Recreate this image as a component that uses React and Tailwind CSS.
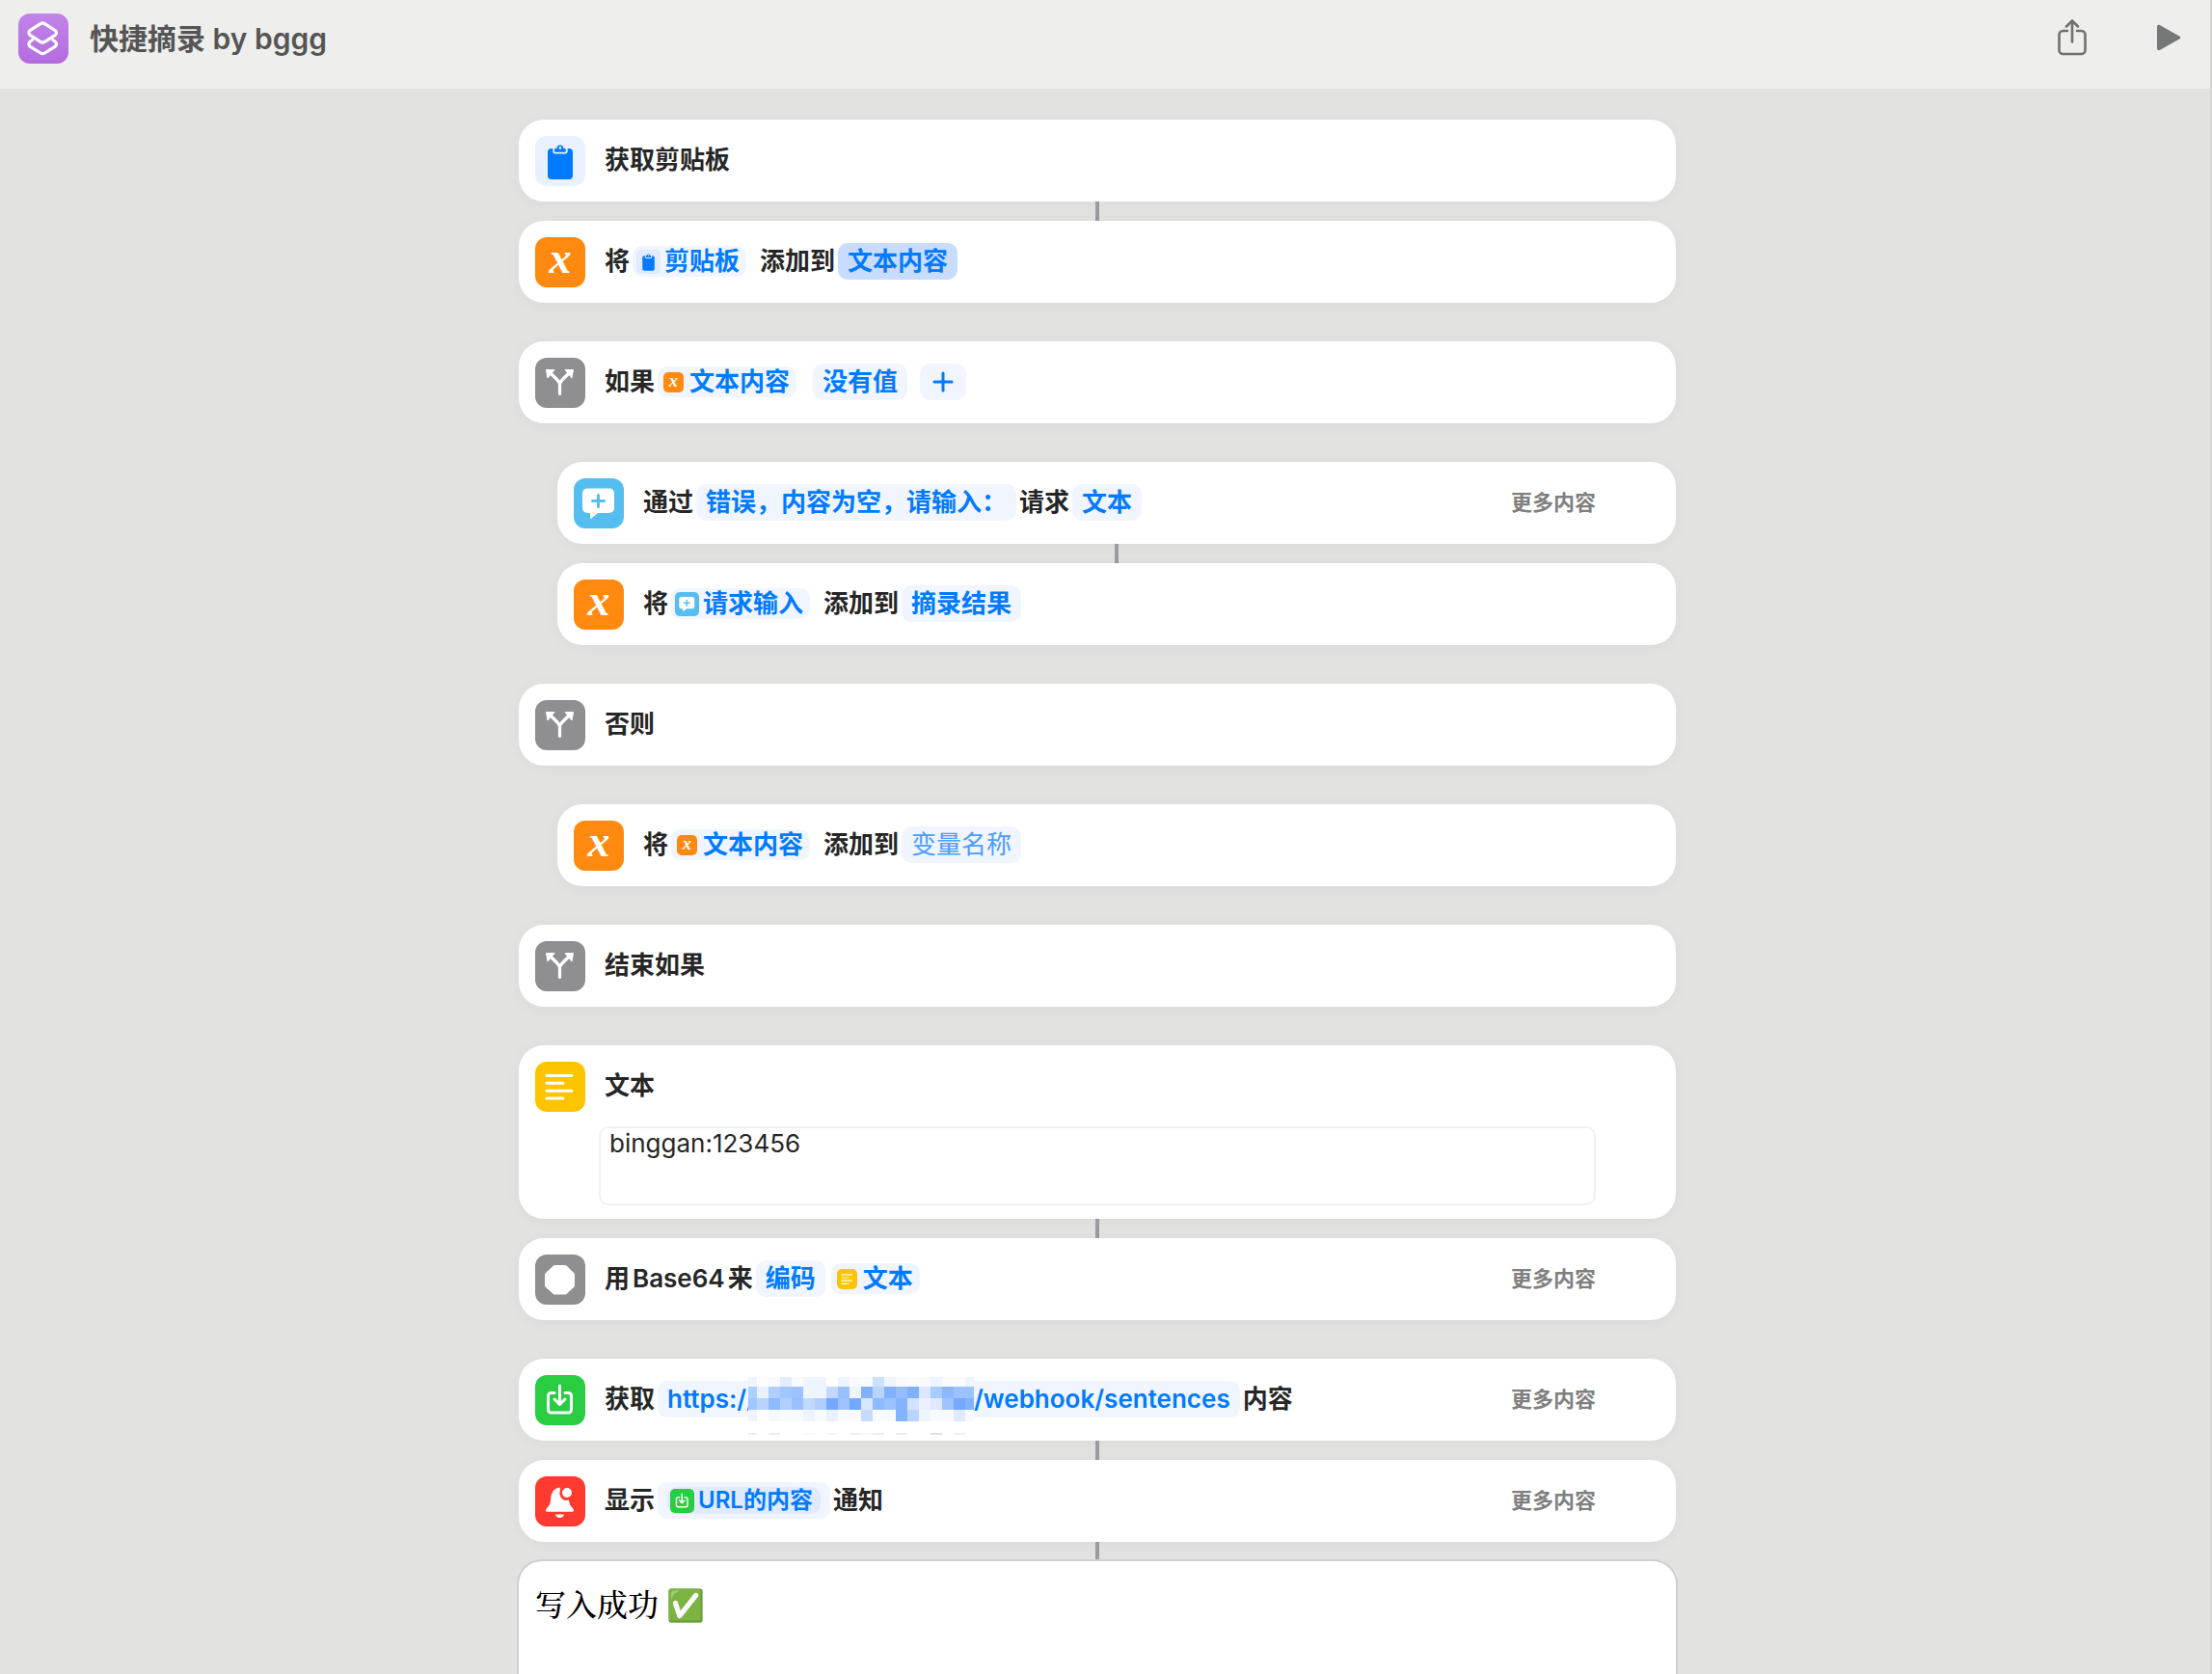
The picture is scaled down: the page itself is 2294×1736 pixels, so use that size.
import { useState } from 'react';

const Shape = {
  clipboard: (
    <>
      <rect x="13" y="13" width="26" height="32" rx="4" fill="#007aff" />
      <path d="M18.300 12.500h15.400v3.300a2.700 2.700 0 0 1-2.700 2.700H21a2.700 2.700 0 0 1-2.700-2.700z" fill="#e9f1ff" />
      <path d="M20 14.500c0-1.200.8-1.800 2-1.800h.6a3.300 3.300 0 0 1 6.600 0h.6c1.200 0 2 .6 2 1.800v.8c0 .9-.6 1.500-1.500 1.500h-8.800c-.9 0-1.500-.6-1.500-1.500z" fill="#007aff" />
      <circle cx="25.900" cy="12.400" r="1.300" fill="#e9f1ff" />
    </>
  ),
  variable: (
    <text x="26" y="37" textAnchor="middle" fontSize="46" fontWeight="700" fontStyle="italic" fontFamily="Liberation Serif, serif" fill="#fff">
      x
    </text>
  ),
  branch: (
    <>
      <path d="M25.500 37.500V28c0-2-1-3.500-2.500-5l-6-6M25.500 28c0-2 1-3.500 2.500-5l6-6" fill="none" stroke="#fff" strokeWidth="3.200" strokeLinecap="round" />
      <path d="M11.500 12.500h8.500l-7 8.500zM39.500 12.500H31l7 8.500z" fill="#fff" stroke="#fff" strokeWidth="1" strokeLinejoin="round" />
    </>
  ),
  ask: (
    <>
      <path d="M14 10.500h23a5 5 0 0 1 5 5V31a5 5 0 0 1-5 5H25l-6.500 5.600c-.8.6-1.500.3-1.500-.7V36h-3a5 5 0 0 1-5-5V15.500a5 5 0 0 1 5-5z" fill="#fff" />
      <path d="M25.500 17.500v12M19.500 23.500h12" stroke="#55bef0" strokeWidth="3" strokeLinecap="round" />
    </>
  ),
  text: (
    <path d="M12 14.500h26M12 22.300h17M12 30.200h26M12 38h17" stroke="#fff" strokeWidth="3" strokeLinecap="round" />
  ),
  octagon: (
    <path d="M19.500 11.500h12.500l8.500 8.500v13l-8.500 8H19.500l-9-8V20z" fill="#fff" stroke="#fff" strokeWidth="1" strokeLinejoin="round" />
  ),
  download: (
    <path d="M20 18.500h-3.500a3 3 0 0 0-3 3V36a3 3 0 0 0 3 3h18a3 3 0 0 0 3-3V21.500a3 3 0 0 0-3-3H31M25.500 11v18M20 25l5.500 5.500L31 25" fill="none" stroke="#fff" strokeWidth="3" strokeLinecap="round" strokeLinejoin="round" />
  ),
  bell: (
    <>
      <path d="M25.500 11.500c-5.500.8-9 5-9.300 11.500-.2 5-1.200 7-3.200 9-1.400 1.400-2 2.200-2 3.300 0 1 .8 1.500 2 1.500h25c1.200 0 2-.5 2-1.500 0-1.100-.6-1.900-2-3.300-1.700-1.700-2.700-3.700-3-7.500a7 7 0 0 1-9.500-7.500c.2-2 .8-3.800 0-5.500z" fill="#fff" />
      <circle cx="33" cy="17" r="5" fill="#fff" />
      <path d="M21 39.500h9c-.3 2-2.200 3.500-4.500 3.500S21.300 41.500 21 39.500z" fill="#fff" />
    </>
  ),
};

const BG = {
  clipboard: 'bg-[#e9f1ff]',
  variable: 'bg-[#ff8a0f]',
  branch: 'bg-[#8e8e93]',
  ask: 'bg-[#55bef0]',
  text: 'bg-[#ffc400]',
  octagon: 'bg-[#8e8e93]',
  download: 'bg-[#28cd41]',
  bell: 'bg-[#ff3b30]',
};

const Icon = ({ name }) => (
  <span className={`block size-[52px] shrink-0 rounded-xl ${BG[name]}`}>
    <svg viewBox="0 0 52 52" className="block size-full overflow-visible" aria-hidden="true">{Shape[name]}</svg>
  </span>
);

const MiniIcon = ({ name }) => {
  const small = name === 'variable' || name === 'text';
  return (
    <span className="flex size-[25px] shrink-0 items-center justify-center">
      <span className={`block rounded-[5px] ${small ? 'size-[21px]' : 'size-[25px]'} ${name === 'clipboard' ? 'bg-[#e0ebff]' : BG[name]}`}>
        <svg viewBox="0 0 52 52" className="block size-full overflow-visible" aria-hidden="true">{Shape[name]}</svg>
      </span>
    </span>
  );
};

// A variable token: small action icon plus its name
const Variable = ({ icon, children }) => (
  <button className="mr-[14px] ml-[3px] flex h-8 items-center gap-1 rounded-[10px] bg-[#f0f5ff] pr-[7px] pl-1 text-[#007aff]">
    <MiniIcon name={icon} />
    {children}
  </button>
);

const Param = ({ selected, placeholder, children }) => (
  <button
    className={`mx-[3px] flex h-[38px] items-center rounded-[10px] px-[10px] ${selected ? 'bg-[#c7dcff]' : 'bg-[#f0f5ff]'} ${placeholder ? 'font-normal text-[#4d9bff]' : 'text-[#007aff]'}`}
  >
    {children}
  </button>
);

const Card = ({ icon, indent, more, body, children }) => (
  <section className={`rounded-[26px] bg-white shadow-[0_2px_16px_rgba(0,0,0,0.04)] ${indent ? 'ml-10' : ''}`}>
    <div className="flex items-start pt-[17px] pr-[83px] pb-4 pl-[17px]">
      <Icon name={icon} />
      <div className="ml-5 flex h-[50px] items-center whitespace-nowrap">{children}</div>
      {more && <button className="ml-auto h-[50px] text-[22px] text-[#808080]">更多内容</button>}
    </div>
    {body}
  </section>
);

const Link = ({ indent }) => (
  <div className={`flex h-5 justify-center ${indent ? 'ml-10' : ''}`}>
    <span className="w-1 bg-[#9a9ba3]" />
  </div>
);

const Gap = () => <div className="h-10" />;

const MOSAIC = [
  ['#f0f6ff', '#fdfdfe', '#f8faff', '#e3edff', '#f8faff', '#eef5ff', '#eef5ff', '#ffffff', '#eef5ff', '#f8faff', '#fafbff', '#cce0ff', '#eef5ff', '#f8faff', '#fafbff', '#f8faff', '#eef5ff', '#fafbff', '#fafbff', '#eef5ff'],
  ['#aed0ff', '#e9f1ff', '#b0cfff', '#a0c6ff', '#9cc2ff', '#eef5ff', '#eef5ff', '#c4d8ff', '#98c0ff', '#ecf5ff', '#7fb1ff', '#b8d4ff', '#7fb1ff', '#94bcff', '#7fb1ff', '#dbe8ff', '#a9ccff', '#8bb8ff', '#9cc2ff', '#9cc2ff'],
  ['#a0c6ff', '#b8d3ff', '#8fbaff', '#b0cfff', '#9cc0ff', '#c0daff', '#b0cfff', '#74a9ff', '#9cc2ff', '#72a9ff', '#d8e8ff', '#8fbaff', '#9cc2ff', '#85b4ff', '#d3e3ff', '#eef0ff', '#dfe9ff', '#a0c2ff', '#74a9ff', '#82b1ff'],
  ['#eef5ff', '#fdfdfe', '#f5f8ff', '#f8faff', '#f8faff', '#eef5ff', '#f8faff', '#e9f1ff', '#f8faff', '#f8faff', '#c8daff', '#f8faff', '#f8faff', '#85b4ff', '#b8d4ff', '#eef5ff', '#f8faff', '#f8faff', '#dfe9ff', '#f8faff'],
];

const SPECKS = [
  [0, '#ebebec'],
  [21, '#ebebec'],
  [57, '#f9f9f9'],
  [81, '#f6f6f6'],
  [105, '#efefef'],
  [117, '#f6f6f6'],
  [129, '#ebebec'],
  [153, '#ebebec'],
  [189, '#e0e0e1'],
  [213, '#f0f0f0'],
];

// Pixelated host name, laid over the end of "https://"
const Redacted = () => (
  <span className="relative -ml-2 h-[38px] w-[234px]">
    <svg viewBox="0 0 234 60" shapeRendering="crispEdges" className="absolute -top-1 left-0 h-[60px] w-[234px]" aria-hidden="true">
      {MOSAIC.map((row, r) =>
        row.map((fill, c) => (
          <rect key={`${r}-${c}`} x={c ? c * 12 - 3 : 0} y={r ? r * 12 - 2 : 0} width={c ? 12 : 9} height={r ? 12 : 10} fill={fill} />
        ))
      )}
      {SPECKS.map(([x, fill]) => (
        <rect key={x} x={x} y="58" width={x ? 12 : 9} height="2" fill={fill} />
      ))}
    </svg>
  </span>
);

const Header = () => (
  <header className="flex h-[92px] items-start bg-[#eeeeec] pt-[14px] pr-[29px] pl-[19px]">
    <svg viewBox="0 0 52 52" className="size-[52px]" aria-hidden="true">
      <defs>
        <linearGradient id="logo" x1="0" y1="0" x2="0" y2="1">
          <stop offset="0" stopColor="#c284e8" />
          <stop offset="1" stopColor="#b36ce0" />
        </linearGradient>
      </defs>
      <rect width="52" height="52" rx="12" fill="url(#logo)" />
      <g fill="none" stroke="#fff" strokeWidth="3.200" strokeLinejoin="round" strokeLinecap="round">
        <path d="M23 10.600a4 4 0 0 1 4.400 0l10.600 6.700c2 1.400 2 4 0 5.400l-10.600 6.600a4 4 0 0 1-4.400 0l-10.600-6.600c-2-1.400-2-4 0-5.400z" />
        <path d="M14.500 27.500l-2.100 1.500c-2 1.400-2 4 0 5.400L23 41a4 4 0 0 0 4.400 0L38 34.400c2-1.400 2-4 0-5.400l-2.100-1.500" />
      </g>
    </svg>
    <h1 className="ml-[22px] text-[30px] leading-[52px] font-semibold text-[#555]">快捷摘录 by bggg</h1>
    <div className="ml-auto flex h-[50px] items-center gap-[70px]">
      <button aria-label="共享">
        <svg viewBox="0 0 32 38" className="h-[38px] w-8" fill="none" stroke="#707070" strokeWidth="2.600" strokeLinecap="round" strokeLinejoin="round">
          <path d="M11 12H6.500a4 4 0 0 0-4 4v16a4 4 0 0 0 4 4h19a4 4 0 0 0 4-4V16a4 4 0 0 0-4-4H21M16 23.500V2M10 7.500L16 1.500l6 6" />
        </svg>
      </button>
      <button aria-label="运行">
        <svg viewBox="0 0 28 30" className="h-[30px] w-7" fill="#767779">
          <path d="M2 4c0-2 1.600-2.700 3.200-1.800l20 11.200c1.400.8 1.400 2.400 0 3.200l-20 11.200C3.600 28.700 2 28 2 26z" />
        </svg>
      </button>
    </div>
  </header>
);

export default function App() {
  const [text, setText] = useState('binggan:123456');
  const [message, setMessage] = useState('写入成功 ✅');

  return (
    <div className="flex h-screen flex-col overflow-hidden border-r-2 border-[#d5d5d3] bg-[#e2e2e0] font-['Inter','Noto_Sans_CJK_SC',sans-serif]">
      <Header />
      <main className="flex-1 pt-8 pr-4 text-[26px] leading-8 font-semibold text-[#262626]">
        <div className="mx-auto flex h-full max-w-[1200px] flex-col">
          <Card icon="clipboard">获取剪贴板</Card>
          <Link />
          <Card icon="variable">
            将<Variable icon="clipboard">剪贴板</Variable>添加到<Param selected>文本内容</Param>
          </Card>
          <Gap />
          <Card icon="branch">
            如果<Variable icon="variable">文本内容</Variable>
            <Param>没有值</Param>
            <button aria-label="添加条件" className="ml-[10px] flex h-[38px] w-12 items-center justify-center rounded-[10px] bg-[#f0f5ff]">
              <svg viewBox="0 0 22 22" className="size-[22px]" stroke="#007aff" strokeWidth="3" strokeLinecap="round">
                <path d="M11 2v18M2 11h18" />
              </svg>
            </button>
          </Card>
          <Gap />
          <Card icon="ask" indent more>
            通过<Param>错误，内容为空，请输入：</Param>请求<Param>文本</Param>
          </Card>
          <Link indent />
          <Card icon="variable" indent>
            将<Variable icon="ask">请求输入</Variable>添加到<Param>摘录结果</Param>
          </Card>
          <Gap />
          <Card icon="branch">否则</Card>
          <Gap />
          <Card icon="variable" indent>
            将<Variable icon="variable">文本内容</Variable>添加到<Param placeholder>变量名称</Param>
          </Card>
          <Gap />
          <Card icon="branch">结束如果</Card>
          <Gap />
          <Card
            icon="text"
            body={
              <div className="-mt-px pr-[83px] pb-[14px] pl-[83px]">
                <textarea
                  aria-label="文本"
                  value={text}
                  onChange={(e) => setText(e.target.value)}
                  className="block h-[82px] w-full resize-none rounded-[10px] border-2 border-[#f1f1f1] bg-white px-[9px] font-normal outline-none"
                />
              </div>
            }
          >
            文本
          </Card>
          <Link />
          <Card icon="octagon" more>
            用<span className="mx-[3px]">Base64</span>来<Param>编码</Param>
            <Variable icon="text">文本</Variable>
          </Card>
          <Gap />
          <Card icon="download" more>
            获取
            <Param>
              https://
              <Redacted />
              /webhook/sentences
            </Param>
            内容
          </Card>
          <Link />
          <Card icon="bell" more>
            显示
            <Param>
              <span className="flex h-7 items-center gap-1 rounded-[10px] bg-[#e0ebff] pr-2 pl-[3px] text-2xl">
                <MiniIcon name="download" />
                URL的内容
              </span>
            </Param>
            通知
          </Card>
          <Link />
          <textarea
            aria-label="通知内容"
            value={message}
            onChange={(e) => setMessage(e.target.value)}
            className="-mx-0.5 -mt-0.5 block flex-1 resize-none rounded-t-[26px] border-2 border-b-0 border-[#cfcfce] bg-white px-[17px] pt-[26px] font-['Liberation_Serif','Noto_Serif_CJK_SC','Noto_Sans_CJK_SC',serif] text-[32px] leading-10 font-medium text-black outline-none"
          />
        </div>
      </main>
    </div>
  );
}
